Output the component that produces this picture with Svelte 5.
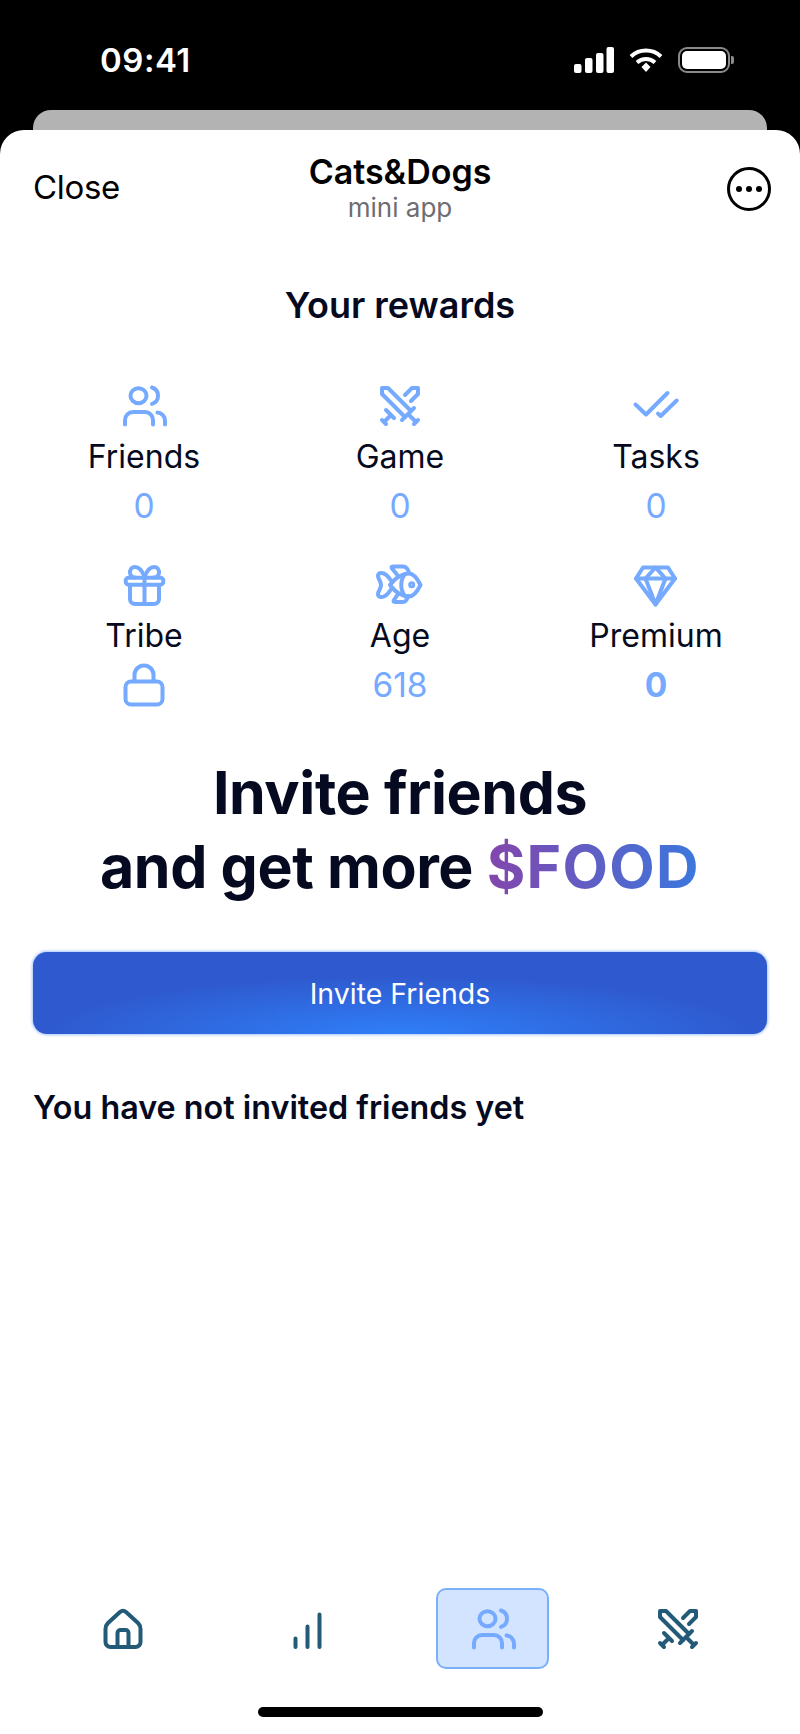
<script>
    const stats = [
        { key: "friends", label: "Friends", value: "0" },
        { key: "swords", label: "Game", value: "0" },
        { key: "checks", label: "Tasks", value: "0" },
        { key: "gift", label: "Tribe", locked: true },
        { key: "fish", label: "Age", value: "618" },
        { key: "gem", label: "Premium", value: "0", strong: true },
    ];
    const tabs = ["home", "bars", "friends", "swords"];
    const active = "friends";
</script>

{#snippet icon(name)}
    <svg class="icon" viewBox="0 0 48 48" fill="none" stroke="currentColor" stroke-width="4" stroke-linecap="round" stroke-linejoin="round">
        {#if name === "friends"}
            <ellipse cx="18.5" cy="13.7" rx="8" ry="7.5" />
            <path d="M32 5.5a8.6 8.6 0 0 1 0 16.4" />
            <path d="M5 42.5V38a8 8 0 0 1 8-8h12a8 8 0 0 1 8 8v4.500" />
            <path d="M37.500 30.500a8 8 0 0 1 7.500 8v4" />
        {:else if name === "swords"}
            <g transform="scale(2)" stroke-width="2">
                <path d="M14.500 17.500 3 6V3h3l11.500 11.500" />
                <path d="M13 19l6-6M16 16l4 4M19 21l2-2" />
                <path d="M14.500 6.500 18 3h3v3l-3.500 3.500" />
                <path d="M5 14l4 4M7 17l-3 3M3 19l2 2" />
            </g>
        {:else if name === "checks"}
            <path d="M3.500 22.500 14 32.500 35.500 11" />
            <path d="M26 31.500l2.700 2.500 16-15.500" />
        {:else if name === "gift"}
            <rect x="5.700" y="16.700" width="37.600" height="7" rx="3" />
            <path d="M10 24v14a5 5 0 0 0 5 5h19a5 5 0 0 0 5-5V24" />
            <path d="M24.500 17v26" />
            <path d="M24.500 16C22 9 19 6 15 6c-4 0-5.500 4-5 6 .5 3 2.500 4.500 5 4.500" />
            <path d="M24.500 16C27 9 30 6 34 6c4 0 5.500 4 5 6-.5 3-2.500 4.500-5 4.500" />
        {:else if name === "fish"}
            <path d="M14 24c6-8.500 14-11.500 19-11.500s9 6.500 11.500 11.500C42 29 38 35.500 33 35.500S20 32.500 14 24Z" />
            <path d="M29 13c-5 6-5 16 0 22" />
            <circle cx="35.700" cy="23.700" r="1.500" />
            <path d="M14.500 19C12 15 8 11.500 4.500 12 2 12.500 1.500 14.500 2.500 17 4 20 5 22 5 24s-1 4-2.500 7c-1 2.500-.5 4.500 2 5 3.500.5 7.500-3 10-7" />
            <path d="M21 13.500 16 7.500c-1-2 0-2 1.500-2H27c3 0 5 2.500 6 6.500" />
            <path d="M22 33l-4 6c-1 2 0 2 1.500 2H27c2 0 4-2 5-6" />
        {:else if name === "gem"}
            <path d="M11 6.500h25l7 11-19.500 26L4 17.500Z" />
            <path d="M4 17.500h39" />
            <path d="M23.500 6.500l-10 11 10 26 10-26Z" />
        {:else if name === "lock"}
            <rect x="5.500" y="20.500" width="37" height="23" rx="5.500" />
            <path d="M14.500 20v-6a9.500 9.500 0 0 1 19 0v6" />
        {:else if name === "home"}
            <path d="M6.500 24c0-2.500.5-4 2.500-6L21 7q3-2.500 6 0l12 11c2 2 2.500 3.500 2.500 6v13a5 5 0 0 1-5 5h-25a5 5 0 0 1-5-5Z" />
            <path d="M18.500 42V28a3 3 0 0 1 3-3h5a3 3 0 0 1 3 3v14" />
        {:else if name === "bars"}
            <path d="M11.500 33.500V42M23.500 21.500V42M35.500 9.500V42" />
        {/if}
    </svg>
{/snippet}

<div class="phone">
    <div class="status">
        <span class="time">09:41</span>
        <div class="status__icons">
            <svg width="40" height="26" viewBox="0 0 40 26" fill="#fff">
                <rect x="0" y="17" width="7.500" height="9" rx="2" />
                <rect x="11" y="11" width="7.500" height="15" rx="2" />
                <rect x="22" y="6" width="7.500" height="20" rx="2" />
                <rect x="32.500" y="0" width="7.500" height="26" rx="2" />
            </svg>
            <svg width="34" height="26" viewBox="0 0 34 26" fill="none" stroke="#fff" stroke-width="4">
                <path d="M2 9.500a22 22 0 0 1 30 0" />
                <path d="M8 15.500a13.500 13.500 0 0 1 18 0" />
                <path d="M12.500 20 17 15.500 21.500 20 17 25Z" fill="#fff" stroke="none" />
            </svg>
            <div class="battery"><i></i></div>
        </div>
    </div>
    <div class="peek"></div>

    <div class="sheet">
        <header class="bar">
            <span class="bar__close">Close</span>
            <div class="bar__title">
                <strong>Cats&amp;Dogs</strong>
                <span>mini app</span>
            </div>
            <div class="bar__more"><i></i><i></i><i></i></div>
        </header>

        <h2 class="rewards">Your rewards</h2>

        <div class="stats">
            {#each stats as s}
                <div class="stat">
                    {@render icon(s.key)}
                    <div class="stat__label">{s.label}</div>
                    <div class="stat__value" class:strong={s.strong}>
                        {#if s.locked}
                            {@render icon("lock")}
                        {:else}
                            {s.value}
                        {/if}
                    </div>
                </div>
            {/each}
        </div>

        <h1 class="headline">Invite friends<br />and get more <span>$FOOD</span></h1>

        <button class="invite">Invite Friends</button>

        <p class="empty">You have not invited friends yet</p>

        <nav class="tabs">
            {#each tabs as t}
                <div class="tab" class:active={t === active}>
                    {@render icon(t)}
                </div>
            {/each}
        </nav>

        <div class="home-bar"></div>
    </div>
</div>

<style>
    :global(body) {
        background: #000;
    }
    .phone {
        width: 800px;
        height: 1734px;
        display: flex;
        flex-direction: column;
        background: #000;
        font-family: Inter, "Liberation Sans", sans-serif;
        color: #060a20;
    }

    .status {
        height: 110px;
        box-sizing: border-box;
        padding: 38px 70px 0 100px;
        display: flex;
        justify-content: space-between;
        align-items: flex-start;
    }
    .time {
        color: #fff;
        font-size: 33px;
        font-weight: 600;
        line-height: 44px;
        letter-spacing: 0.5px;
    }
    .status__icons {
        display: flex;
        align-items: center;
        gap: 15px;
        margin-top: 9px;
    }
    .battery {
        position: relative;
        width: 52px;
        height: 26px;
        box-sizing: border-box;
        border: 2px solid #8a8a8a;
        border-radius: 9px;
        padding: 2px;
    }
    .battery i {
        display: block;
        height: 100%;
        background: #fff;
        border-radius: 5px;
    }
    .battery::after {
        content: "";
        position: absolute;
        right: -6px;
        top: 7px;
        width: 3px;
        height: 8px;
        background: #8a8a8a;
        border-radius: 0 2px 2px 0;
    }

    .peek {
        height: 20px;
        margin: 0 33px;
        background: #b3b3b3;
        border-radius: 18px 18px 0 0;
    }

    .sheet {
        flex: 1;
        display: flex;
        flex-direction: column;
        background: #fff;
        border-radius: 24px 24px 0 0;
    }

    .bar {
        display: grid;
        grid-template-columns: 1fr auto 1fr;
        align-items: start;
        padding: 22px 29px 0;
        color: #000;
    }
    .bar__close {
        margin: 15px 0 0 4px;
        font-size: 33px;
        line-height: 40px;
        letter-spacing: -0.3px;
    }
    .bar__title {
        display: flex;
        flex-direction: column;
        align-items: center;
    }
    .bar__title strong {
        font-size: 34px;
        font-weight: 600;
        line-height: 40px;
    }
    .bar__title span {
        font-size: 26px;
        line-height: 32px;
        color: #6d6d72;
    }
    .bar__more {
        justify-self: end;
        width: 44px;
        height: 44px;
        box-sizing: border-box;
        margin-top: 15px;
        border: 3px solid #000;
        border-radius: 50%;
        display: flex;
        align-items: center;
        justify-content: center;
        gap: 4px;
    }
    .bar__more i {
        width: 6px;
        height: 6px;
        border-radius: 50%;
        background: #000;
    }

    .rewards {
        margin: 59px 0 0;
        text-align: center;
        font-size: 36px;
        font-weight: 600;
        line-height: 44px;
    }

    .stats {
        display: grid;
        grid-template-columns: repeat(3, 256px);
        row-gap: 35px;
        padding: 0 16px;
        margin-top: 55px;
    }
    .stat {
        display: flex;
        flex-direction: column;
        align-items: center;
        color: #76aaff;
    }
    .icon {
        display: block;
        width: 48px;
        height: 48px;
        flex: none;
    }
    .stat__label {
        margin-top: 7px;
        height: 40px;
        font-size: 32px;
        line-height: 40px;
        color: #060a20;
    }
    .stat__value {
        margin-top: 9px;
        height: 40px;
        display: flex;
        align-items: center;
        font-size: 33.500px;
        font-weight: 400;
        line-height: 40px;
    }
    .stat__value.strong {
        font-weight: 700;
    }

    .headline {
        margin: 51px 0 0;
        text-align: center;
        font-size: 59px;
        font-weight: 700;
        line-height: 74px;
        letter-spacing: -0.4px;
    }
    .headline span {
        background: linear-gradient(90deg, #8346ac, #3a78de);
        -webkit-background-clip: text;
        background-clip: text;
        color: transparent;
        letter-spacing: 1.300px;
    }

    .invite {
        display: block;
        width: 734px;
        height: 82px;
        margin: 48px 33px 0;
        padding: 0;
        border: 0;
        border-radius: 14px;
        background: radial-gradient(ellipse 48% 70% at 50% 100%, #2f7ff8, rgba(47, 127, 248, 0)), #2f5acf;
        box-shadow: 0 0 3px 1px #a3c3f8;
        color: #fff;
        font-family: inherit;
        font-size: 28.500px;
        font-weight: 400;
    }

    .empty {
        margin: 54px 33px 0;
        font-size: 32.300px;
        font-weight: 600;
        line-height: 40px;
    }

    .tabs {
        display: grid;
        grid-template-columns: repeat(4, 185px);
        padding: 0 30px;
        margin-top: auto;
    }
    .tab {
        height: 81px;
        display: flex;
        align-items: center;
        justify-content: center;
        color: #225a78;
    }
    .tab.active {
        width: 113px;
        box-sizing: border-box;
        justify-self: center;
        background: #d2e4ff;
        border: 2px solid #7ab0fa;
        border-radius: 10px;
        color: #76aaff;
    }

    .home-bar {
        width: 285px;
        height: 10px;
        margin: 38px auto 17px;
        background: #000;
        border-radius: 5px;
    }
</style>
